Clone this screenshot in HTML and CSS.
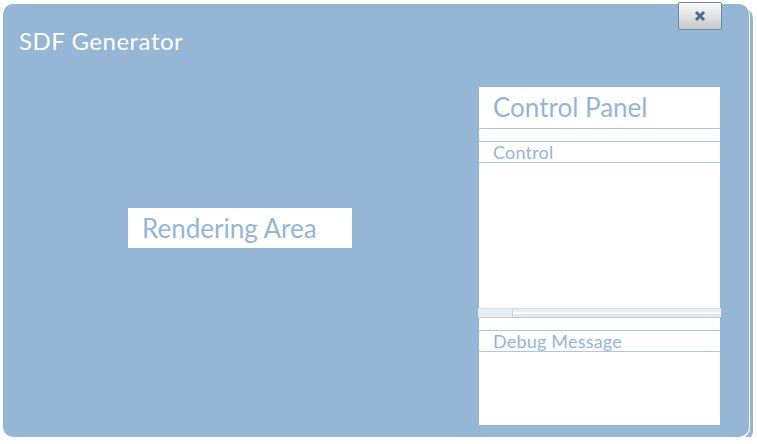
FILE: index.html
```html
<!DOCTYPE html>
<html>
<head>
<meta charset="utf-8">
<link rel="stylesheet" href="styles.css">
</head>
<body>
<div class="window">
  <div class="header">
    <div class="title">SDF Generator</div>
  </div>
  <button class="close" aria-label="Close">
    <svg width="12" height="12" viewBox="0 0 12 12"><path d="M2 2 L10 10 M10 2 L2 10" stroke="#4b6c8e" stroke-width="3" stroke-linecap="butt"/></svg>
  </button>
  <div class="body">
    <div class="left">
      <div class="render">Rendering Area</div>
    </div>
    <div class="panel">
      <div class="panel-head">Control Panel</div>
      <div class="gap"></div>
      <div class="section">Control</div>
      <div class="content"></div>
      <div class="scrollbar"><div class="thumb"></div><div class="track"></div></div>
      <div class="gap2"></div>
      <div class="section">Debug Message</div>
      <div class="rest"></div>
    </div>
  </div>
</div>
</body>
</html>
```

FILE: styles.css
```css
* { box-sizing: border-box; }
html, body { margin: 0; padding: 0; background: #fff; }
body { font-family: Lato, "Open Sans", sans-serif; }
.window {
  position: relative;
  margin: 4px 0 0 3px;
  width: 746px;
  height: 433px;
  border-radius: 10px;
  background: #95b6d4;
  box-shadow: 1px 1px 0 0 #fff, 4px 4px 0 0 #95b6d4;
  display: flex;
  flex-direction: column;
}
.header { height: 83px; padding: 22px 0 0 16px; }
.title { color: #fff; font-size: 24px; letter-spacing: 0.5px; line-height: 30px; }
.close {
  position: absolute;
  top: -2px; left: 675px;
  width: 44px; height: 28px;
  border: 1px solid #6e8aa6;
  border-radius: 2px;
  background: linear-gradient(#fafafa, #dcdcdc 60%, #c6c6c6);
  display: flex; align-items: center; justify-content: center;
  padding: 0;
}
.close svg { display: block; }
.body { flex: 1; display: flex; padding-bottom: 12px; }
.left { flex: 1; display: flex; justify-content: center; align-items: flex-start; padding: 121px 2px 0 0; }
.render {
  width: 224px; height: 40px;
  background: #fff;
  color: #93b6d8;
  font-size: 26px;
  line-height: 40px;
  padding-left: 14px;
}
.panel {
  width: 241px;
  margin-right: 29px;
  background: #fff;
  display: flex;
  flex-direction: column;
  color: #93b6d8;
}
.panel-head {
  height: 42px;
  font-size: 26px;
  line-height: 40px;
  padding-left: 14px;
  border-bottom: 1px solid #a9c8e2;
}
.gap { height: 13px; border-bottom: 1px solid #a9c8e2; }
.section {
  height: 21px;
  font-size: 18px;
  letter-spacing: 0.2px;
  line-height: 20px;
  padding-left: 14px;
  border-bottom: 1px solid #a9c8e2;
}
.content { flex: 0 0 145px; }
.scrollbar {
  height: 10px;
  margin-left: -1px;
  margin-right: -1px;
  display: flex;
  border-top: 1px solid #dedede;
  border-bottom: 1px solid #c9c9c9;
}
.thumb { width: 35px; background: #e5edf3; border-right: 1px solid #d2d2d2; }
.track { flex: 1; background: linear-gradient(#ececf6 0 3px, #fff 3px 5px, #e6e6f3 5px); }
.gap2 { height: 13px; border-bottom: 1px solid #a9c8e2; }
.rest { flex: 1; }
```
